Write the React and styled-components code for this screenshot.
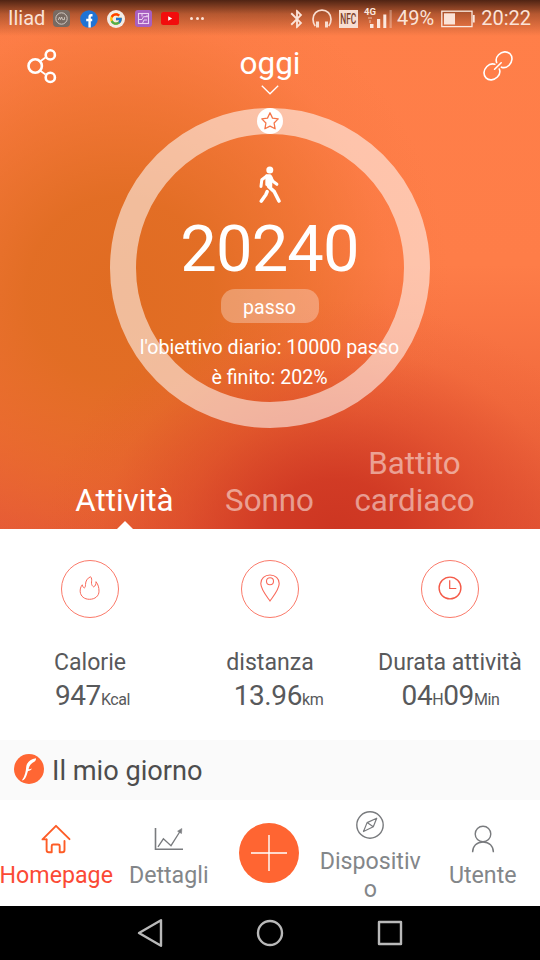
import React, { useState } from 'react';
import styled, { createGlobalStyle } from 'styled-components';
import { MdBluetooth } from 'react-icons/md';
import { FcGoogle } from 'react-icons/fc';

const tabs = ['Attività', 'Sonno', 'Battito cardiaco'];

const ShareIcon = () => (
  <svg width="30" height="36" viewBox="0 0 30 36" fill="none" stroke="#fff">
    <path d="M13 13.500l5.500-4M13 22.500l5.500 4" strokeWidth="1.800" />
    <circle cx="8.200" cy="18" r="6.700" strokeWidth="2.600" />
    <circle cx="23.300" cy="6.900" r="4.600" strokeWidth="2.600" />
    <circle cx="23.300" cy="29.400" r="4.600" strokeWidth="2.600" />
  </svg>
);

const LinkIcon = () => (
  <svg width="30" height="30" viewBox="0 0 30 30" fill="none" stroke="#fff" strokeWidth="1.600" strokeLinecap="round">
    <path d="M13.600 11.600C12.600 8.700 13.300 6 15.600 3.700C19.100.2 24.100-.1 27 2.800s2.600 7.900-.9 11.400c-2.200 2.200-5 3-7.700 2" />
    <path d="M11.800 13.300c-2.700-.9-5.700 0-7.900 2.200C.4 19 .1 24 3 26.900s7.900 2.600 11.400-.9c2.300-2.300 3-5.300 1.900-8" />
    <path d="M11.600 18.200l6.600-6.400" />
  </svg>
);

const WalkIcon = () => (
  <svg width="24" height="38" viewBox="0 0 24 38" fill="none" stroke="#fff" strokeLinecap="round" strokeLinejoin="round">
    <circle cx="11.800" cy="4" r="3.500" fill="#fff" stroke="none" />
    <path d="M8.400 10.300L3.800 13.800L3 20.400" strokeWidth="3" />
    <path d="M12.700 10.800L14.900 15.200L18.900 18.300" strokeWidth="3" />
    <path d="M8.400 9.300h3.800l1.300 2l-.3 9.500l-4.900-2z" fill="#fff" strokeWidth="2" />
    <path d="M10.600 20.500L16.300 25.700L21 35" strokeWidth="3.600" />
    <path d="M9.200 25.500L7.800 28.800L3.200 35.200" strokeWidth="3.500" />
  </svg>
);

const StarIcon = () => (
  <svg width="20" height="20" viewBox="0 0 20 20" fill="none" stroke="#f5764a" strokeWidth="1.300" strokeLinejoin="round">
    <path d="M10 1.800l2.500 5.300l5.700.8l-4.100 4.100l1 5.800L10 15.100l-5.100 2.700l1-5.800L1.800 7.900l5.700-.8z" />
  </svg>
);

const FlameIcon = () => (
  <svg width="22" height="25" viewBox="0 0 22 25" fill="none" stroke="#f9695a" strokeWidth="1" strokeLinejoin="round">
    <path d="M11.400 .8C8.300 2.200 6.500 5 6.500 8.600C6.500 10.500 6.100 11.500 5.300 12C4.200 11.500 3.600 10.400 3.300 8.800C1.600 10.800 1 13.300 1.200 15.800C1.700 20.400 5.400 23.300 10.500 23.300C16 23.300 20 20 20 15.200C20 11.600 19.200 8.500 17 5.700C17.200 8.300 16.300 10.100 14.700 10.900C13.400 10.100 12.600 9 12.500 7.300C12.400 5.300 13.100 3.700 12.300 1.800C12.100 1.200 11.800 .9 11.400 .8z" />
  </svg>
);

const PinIcon = () => (
  <svg width="20" height="28" viewBox="0 0 20 28" fill="none" stroke="#f9695a" strokeWidth="1.100">
    <path d="M10 27C6.800 22.500.8 15.500.8 9.600C.8 4.600 4.700 1 10 1s9.200 3.600 9.200 8.600C19.200 15.500 13.200 22.500 10 27z" />
    <circle cx="10" cy="7.200" r="3.500" />
  </svg>
);

const ClockIcon = () => (
  <svg width="24" height="24" viewBox="0 0 24 24" fill="none" stroke="#f45a48" strokeWidth="1.400">
    <circle cx="12" cy="12" r="10.900" />
    <path d="M11.700 4.200v8.300h6.600" strokeWidth="1.200" />
  </svg>
);

const HomeIcon = () => (
  <svg width="30" height="30" viewBox="0 0 30 30" fill="none" stroke="#fd5c26" strokeWidth="1.900" strokeLinejoin="round" strokeLinecap="round">
    <path d="M5.400 15.400H1.500L15 1.800l13.500 13.400" />
    <path d="M5.600 15.500V26q0 2.300 2.300 2.300H10.700V22q0-1.500 1.500-1.500h5q1.500 0 1.500 1.500v6.300h2.500q2.300 0 2.300-2.300V17" />
  </svg>
);

const ChartIcon = () => (
  <svg width="30" height="24" viewBox="0 0 30 24" fill="none" stroke="#797b7e" strokeWidth="1.300">
    <path d="M1.500 1v21.300H29" strokeWidth="1.600" />
    <path d="M4 19.800l5.400-8l7.600 6.900L26.600 3.500" />
    <path d="M23.600 4.200l4.200-2.700l-.3 5z" fill="#797b7e" strokeWidth=".6" />
  </svg>
);

const CompassIcon = () => (
  <svg width="28" height="28" viewBox="0 0 28 28" fill="none" stroke="#797b7e" strokeWidth="1.400" strokeLinejoin="round">
    <circle cx="14" cy="14" r="13.200" />
    <path d="M20.700 7.200l-3.400 8.600L7.500 20.500l3.600-8.900zM11.100 11.600l6.200 4.200" strokeWidth="1.200" />
  </svg>
);

const UserIcon = () => (
  <svg width="24" height="28" viewBox="0 0 24 28" fill="none" stroke="#797b7e" strokeWidth="1.400">
    <circle cx="12" cy="9" r="7.800" />
    <path d="M1.600 27.300C1.600 21 5.800 17 12 17s10.400 4 10.400 10.300" />
  </svg>
);

const HeadphonesIcon = () => (
  <svg width="20" height="20" viewBox="0 0 20 20" fill="none" stroke="#f8ddd0">
    <path d="M3.200 17C1.600 14.800 1 12.700 1 10.300C1 5 4.900 1.100 10 1.100S19 5 19 10.300c0 2.400-.6 4.500-2.200 6.700" strokeWidth="1.700" />
    <path d="M5.500 12.500v6M14.500 12.500v6" strokeWidth="3" />
  </svg>
);

const NfcIcon = () => (
  <svg width="19" height="18" viewBox="0 0 19 18">
    <rect width="19" height="18" fill="#f8ddd0" />
    <text transform="translate(1.200 14.300) scale(.56 1)" fontSize="15" fontWeight="500" fill="#7d4029">NFC</text>
  </svg>
);

const SignalIcon = () => (
  <svg width="29" height="24" viewBox="0 0 29 24" fill="#fbe8df" overflow="visible">
    <text x="0" y="7.500" fontWeight="700" fontSize="9.500">4G</text>
    <path d="M4 10h4v2H4zM5 13h2v3H5z" opacity=".35" />
    <path d="M6 17h3.500v4H6zM13 12h3.200v9H13zM19.300 7.500h3V21h-3z" />
    <path d="M25.500 3h2.300v18h-2.300z" opacity=".35" />
  </svg>
);

const BatteryIcon = () => (
  <svg width="34" height="18" viewBox="0 0 34 18" fill="none" stroke="#fbe8df" strokeWidth="1.300">
    <rect x=".8" y="1.200" width="30.200" height="15.400" />
    <path d="M32.800 5v7.500" strokeWidth="1.800" />
    <rect x="3" y="3.300" width="11" height="11.200" fill="#fbe3d8" stroke="none" />
  </svg>
);

const FacebookIcon = () => (
  <svg width="18" height="18" viewBox="0 0 18 18">
    <circle cx="9" cy="9" r="8.800" fill="#2073d4" />
    <path d="M12.500 5.200h-1.300q-1.600 0-1.600 1.800V17.500M6.200 10h6" fill="none" stroke="#fff" strokeWidth="2.400" />
  </svg>
);

const AppBadgeIcon = () => (
  <svg width="17" height="17" viewBox="0 0 17 17" fill="none" stroke="#d3c9c2">
    <rect width="17" height="17" rx="4" fill="#786a62" stroke="none" />
    <circle cx="8.500" cy="8.500" r="5.700" strokeWidth="1" />
    <path d="M5.300 10l1.200-3l1 2.600l1.200-2.600l.8 2.600h2V7.200" strokeWidth=".9" />
  </svg>
);

const GalleryIcon = () => (
  <svg width="17" height="17" viewBox="0 0 17 17" fill="none" stroke="#ecd2f2">
    <rect width="17" height="17" rx="3" fill="#a75fc0" stroke="none" />
    <rect x="3.500" y="3.500" width="10" height="10" strokeWidth="1.100" />
    <path d="M4 9.500h3l1.500-2.800H13M7 4v2.500M7.500 13.300L9 10h3M12.500 5l-2 2" strokeWidth="1" />
  </svg>
);

const YoutubeIcon = () => (
  <svg width="18" height="13" viewBox="0 0 18 13">
    <rect width="18" height="13" rx="2.500" fill="#f20d0d" />
    <path d="M7.200 4.200v4.600l4-2.300z" fill="#fff" />
  </svg>
);

const BrandIcon = () => (
  <svg width="30" height="30" viewBox="0 0 30 30">
    <circle cx="15" cy="15" r="15" fill="#ff6633" />
    <path d="M22 4.300C16 5.300 12.700 8.700 12.200 13C11.800 17.500 11 22 7.800 26.500C10.500 26.300 12 23.500 13.200 19.500L14 16.900C15.800 16.900 17.200 16.200 18 14.600C16.900 15.200 15.800 15.400 14.500 15.300C15.300 11.500 17.300 9.300 20.300 7.800C21.400 7.200 22.200 6 22 4.300z" fill="#fff" />
  </svg>
);

const stats = [
  { label: 'Calorie', icon: <FlameIcon />, value: [['947', 'Kcal']], shift: 5 },
  { label: 'distanza', icon: <PinIcon />, value: [['13.96', 'km']], shift: 17 },
  { label: 'Durata attività', icon: <ClockIcon />, value: [['04', 'H'], ['09', 'Min']], shift: 1 },
];

const App = () => {
  const [tab, setTab] = useState(0);

  return (
    <Phone>
      <GlobalStyle />
      <Hero>
        <StatusBar>
          <Carrier>Iliad</Carrier>
          <Notifications>
            <AppBadgeIcon />
            <FacebookIcon />
            <GoogleBadge><FcGoogle size={14} /></GoogleBadge>
            <GalleryIcon />
            <YoutubeIcon />
          </Notifications>
          <Dots><i /><i /><i /></Dots>
          <SystemIcons>
            <MdBluetooth size={22} />
            <HeadphonesIcon />
            <NfcIcon />
            <SignalIcon />
          </SystemIcons>
          <Percent>49%</Percent>
          <BatteryIcon />
          <Clock>20:22</Clock>
        </StatusBar>

        <Header>
          <ShareIcon />
          <Day>
            oggi
            <svg width="18" height="10" viewBox="0 0 18 10" fill="none" stroke="#fff" strokeWidth="1.300">
              <path d="M.8 .8L9 8.800L17.200 .8" />
            </svg>
          </Day>
          <LinkIcon />
        </Header>

        <Ring>
          <Badge><StarIcon /></Badge>
          <WalkIcon />
          <Steps>20240</Steps>
          <Pill>passo</Pill>
          <Goal>l'obiettivo diario: 10000 passo</Goal>
          <Goal>è finito: 202%</Goal>
        </Ring>

        <Tabs>
          {tabs.map((name, i) => (
            <Tab key={name} $active={tab === i} onClick={() => setTab(i)}>{name}</Tab>
          ))}
        </Tabs>
      </Hero>

      <Stats>
        {stats.map((s) => (
          <Stat key={s.label}>
            <StatIcon>{s.icon}</StatIcon>
            <StatLabel>{s.label}</StatLabel>
            <StatValue $shift={s.shift}>
              {s.value.map(([n, unit]) => (
                <React.Fragment key={unit}>{n}<small>{unit}</small></React.Fragment>
              ))}
            </StatValue>
          </Stat>
        ))}
      </Stats>

      <MyDay>
        <BrandIcon />
        <span>Il mio giorno</span>
      </MyDay>

      <BottomNav>
        <NavItem $active><IconBox><HomeIcon /></IconBox><span>Homepage</span></NavItem>
        <NavItem><IconBox><ChartIcon /></IconBox><span>Dettagli</span></NavItem>
        <AddButton>
          <svg width="36" height="36" viewBox="0 0 36 36" stroke="#fff" strokeWidth="1.400">
            <path d="M18 0v36M0 18h36" />
          </svg>
        </AddButton>
        <NavItem><IconBox><CompassIcon /></IconBox><span>Dispositivo</span></NavItem>
        <NavItem><IconBox><UserIcon /></IconBox><span>Utente</span></NavItem>
      </BottomNav>

      <SystemNav>
        <svg width="26" height="30" viewBox="0 0 26 30"><path d="M2 15L24 2.200v25.600z" /></svg>
        <svg width="28" height="28" viewBox="0 0 28 28"><circle cx="14" cy="14" r="12" /></svg>
        <svg width="26" height="26" viewBox="0 0 26 26"><rect x="2" y="2" width="22" height="22" /></svg>
      </SystemNav>
    </Phone>
  );
};

const GlobalStyle = createGlobalStyle`
  * {
    box-sizing: border-box;
  }

  body {
    margin: 0;
    font-family: Roboto, "Liberation Sans", sans-serif;
  }

  svg {
    display: block;
    flex-shrink: 0;
  }
`;

const Phone = styled.div`
  display: flex;
  flex-direction: column;
  width: 540px;
  height: 960px;
  overflow: hidden;
  background: #fff;
`;

const Hero = styled.section`
  display: flex;
  flex-direction: column;
  height: 529px;
  color: #fff;
  background:
    linear-gradient(rgba(65, 28, 15, 0.92) 0, rgba(110, 50, 25, 0.5) 14px, rgba(255, 126, 72, 0) 36px),
    radial-gradient(ellipse 290px 230px at 335px 530px, #cd3622 0, rgba(206, 54, 34, 0.88) 22%, rgba(214, 64, 38, 0.5) 52%, rgba(226, 84, 46, 0.15) 80%, rgba(230, 90, 50, 0) 100%),
    radial-gradient(ellipse 330px 330px at 120px 290px, #e06c22 0, rgba(225, 109, 35, 0.95) 28%, rgba(230, 110, 38, 0.55) 58%, rgba(240, 116, 55, 0.16) 82%, rgba(250, 125, 70, 0) 100%),
    linear-gradient(#ff7f49 0, #fe7d48 50%, #f26a3d 76%, #e45636 100%);
`;

const StatusBar = styled.div`
  display: flex;
  align-items: center;
  height: 37px;
  padding: 0 9px 0 8px;
  font-size: 20px;
  line-height: 37px;
  color: #fbe3d8;
`;

const Carrier = styled.span`
  width: 45px;
`;

const Notifications = styled.div`
  display: flex;
  align-items: center;
  gap: 9.5px;
`;

const GoogleBadge = styled.span`
  display: flex;
  align-items: center;
  justify-content: center;
  width: 18px;
  height: 18px;
  border-radius: 50%;
  background: #f3ebe6;
`;

const Dots = styled.div`
  display: flex;
  gap: 2.5px;
  margin-left: 11px;

  i {
    width: 3px;
    height: 3px;
    border-radius: 50%;
    background: #fbe3d8;
  }
`;

const SystemIcons = styled.div`
  display: flex;
  align-items: center;
  gap: 4px;
  margin-left: auto;

  svg:nth-of-type(3) {
    margin: 0 2px 0 3px;
  }
`;

const Percent = styled.span`
  margin: 0 7px 0 4px;
`;

const Clock = styled.span`
  margin-left: 6px;
`;

const Header = styled.header`
  display: flex;
  justify-content: space-between;
  height: 71px;
  padding: 11px 27px 0;

  > svg:last-child {
    margin-top: 3px;
  }
`;

const Day = styled.div`
  display: flex;
  flex-direction: column;
  align-items: center;
  margin-top: -2px;
  font-size: 31.5px;
  line-height: 36px;

  svg {
    margin-top: 3px;
  }
`;

const Ring = styled.div`
  position: relative;
  display: flex;
  flex-direction: column;
  align-items: center;
  flex-shrink: 0;
  width: 320px;
  height: 320px;
  margin-left: 109.5px;
  padding-top: 32px;
  border: 26px solid rgba(255, 255, 255, 0.55);
  border-radius: 50%;
`;

const Badge = styled.div`
  position: absolute;
  top: -26px;
  left: 121px;
  display: flex;
  align-items: center;
  justify-content: center;
  width: 26px;
  height: 26px;
  border-radius: 50%;
  background: #fff;
`;

const Steps = styled.div`
  margin-top: 12px;
  font-size: 65px;
  line-height: 66px;
  letter-spacing: -0.8px;
`;

const Pill = styled.div`
  width: 98px;
  height: 34px;
  margin: 7px 0 10px;
  border-radius: 14px;
  text-align: center;
  font-size: 19.5px;
  line-height: 37px;
  background: rgba(255, 255, 255, 0.3);
`;

const Goal = styled.div`
  font-size: 19.6px;
  line-height: 30px;
  white-space: nowrap;
`;

const Tabs = styled.nav`
  display: grid;
  grid-template-columns: repeat(3, 145px);
  flex: 1;
  margin-left: 52px;
`;

const Tab = styled.div`
  position: relative;
  display: flex;
  align-items: flex-end;
  justify-content: center;
  padding: 0 10px 10px;
  text-align: center;
  font-size: 31.3px;
  line-height: 37px;
  color: ${(p) => (p.$active ? '#fff' : 'rgba(255, 255, 255, 0.5)')};

  &::after {
    content: "";
    display: ${(p) => (p.$active ? 'block' : 'none')};
    position: absolute;
    bottom: 0;
    left: 65px;
    border: 8px solid transparent;
    border-top: 0;
    border-bottom-color: #fff;
  }
`;

const Stats = styled.section`
  display: grid;
  grid-template-columns: repeat(3, 1fr);
  height: 211px;
  padding-top: 31px;
  color: #58595b;
`;

const Stat = styled.div`
  display: flex;
  flex-direction: column;
  align-items: center;
`;

const StatIcon = styled.div`
  display: flex;
  align-items: center;
  justify-content: center;
  width: 58px;
  height: 58px;
  padding-bottom: 2px;
  border: 1.2px solid #fb7a6a;
  border-radius: 50%;
`;

const StatLabel = styled.div`
  margin-top: 29px;
  font-size: 23.1px;
  line-height: 32px;
  white-space: nowrap;
`;

const StatValue = styled.div`
  padding-left: ${(p) => p.$shift}px;
  font-size: 28px;
  line-height: 34px;
  letter-spacing: -0.4px;

  small {
    font-size: 16px;
  }
`;

const MyDay = styled.section`
  display: flex;
  align-items: center;
  gap: 8px;
  height: 60px;
  padding: 0 14px 2px;
  font-size: 27.2px;
  color: #4d4d4d;
  background: #fafafa;

  span {
    padding-top: 4px;
  }
`;

const BottomNav = styled.nav`
  display: flex;
  align-items: center;
  height: 106px;
`;

const NavItem = styled.div`
  display: flex;
  flex-direction: column;
  align-items: center;
  width: 112.5px;
  padding-top: 7px;
  text-align: center;
  font-size: 23.2px;
  line-height: 28px;
  color: ${(p) => (p.$active ? '#fb4a35' : '#838689')};

  span {
    max-width: 104px;
    white-space: ${(p) => (p.$active ? 'nowrap' : 'normal')};
    overflow-wrap: anywhere;
    display: flex;
    justify-content: center;
  }
`;

const IconBox = styled.div`
  display: flex;
  align-items: center;
  justify-content: center;
  height: 30px;
  margin-bottom: 7px;
`;

const AddButton = styled.button`
  display: flex;
  align-items: center;
  justify-content: center;
  width: 60px;
  height: 60px;
  margin: 0 15px 0 14px;
  padding: 0;
  border: none;
  border-radius: 50%;
  background: #ff6532;
`;

const SystemNav = styled.footer`
  display: flex;
  align-items: center;
  justify-content: center;
  gap: 93px;
  height: 54px;
  background: #000;

  svg {
    fill: none;
    stroke: #b9b9b9;
    stroke-width: 2.4;
    stroke-linejoin: round;
  }
`;

export default App;
